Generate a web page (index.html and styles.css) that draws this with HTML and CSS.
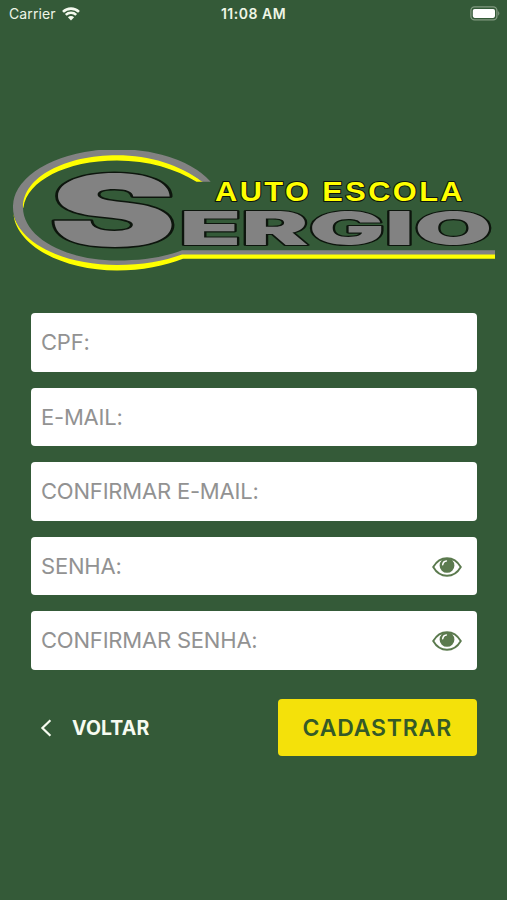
FILE: index.html
```
<!DOCTYPE html>
<html lang="pt-BR">
<head>
<meta charset="UTF-8">
<meta name="viewport" content="width=device-width, initial-scale=1">
<title>Auto Escola Sergio - Cadastro</title>

<link rel="stylesheet" href="styles.css">
</head>

<body>

<!-- barra de status -->
<header class="status">
    <div class="carrier">
        <span>Carrier</span>
        <svg class="wifi" viewBox="0 0 18 14">
            <path d="M1 4.9 A11.5 11.5 0 0 1 17 4.9" />
            <path d="M3.8 7.9 A7.5 7.5 0 0 1 14.2 7.9" />
            <path class="dot" d="M5.9 10.2 A4.4 4.4 0 0 1 12.1 10.2 L9 13.4 Z" />
        </svg>
    </div>
    <div class="time">11:08 AM</div>
    <svg class="battery" viewBox="0 0 31 15">
        <rect class="case" x="0.9" y="0.9" width="26" height="13" rx="3.6" />
        <rect class="charge" x="2.8" y="2.9" width="22.2" height="9" rx="1.8" />
        <path class="tip" d="M28.2 5 Q30.6 7.4 28.2 9.8 Z" />
    </svg>
</header>

<main class="page">

    <!-- logo -->
    <svg class="logo" viewBox="13 150 482 122" role="img" aria-label="Auto Escola Sergio">
        <path class="yellow" d="M203 181.7 C180 164 150 154 117 154 C65 154 21 176 21 210 L23.5 207.5 C27 181 66 160.5 117 160.5 C148 160.5 176 169 196.5 181.7 Z" />
        <path class="yellow" d="M13.5 214 C16 245 62 270.5 117 270.5 C142 270.5 165 266 183 258.8 H495 V253.5 H182 C162 261 142 264 117 264 C62 264 19 240 13.5 214 Z" />
        <path class="gray" d="M210.7 181.7 A104 57.5 0 0 0 13 207.5 C13 240 60 265 117 265 C142 265 164 261 182 254.5 H495 V250.3 H182 C163 257.5 142 260.5 117 260.5 C65 260.5 23 237 23 207.5 C23 177 65 155.3 117 155.3 C150 155.3 180 165 202 181.7 Z" />
        <text class="big" x="49" y="246" textLength="128" lengthAdjust="spacingAndGlyphs">S</text>
        <text class="name" x="179.5" y="244.6" textLength="313" lengthAdjust="spacingAndGlyphs">ERGIO</text>
        <text class="sub" x="215" y="201.4" textLength="250" lengthAdjust="spacingAndGlyphs">AUTO ESCOLA</text>
    </svg>

    <form class="form">
        <div class="field"><input type="text" placeholder="CPF:"></div>
        <div class="field"><input type="email" placeholder="E-MAIL:"></div>
        <div class="field"><input type="email" placeholder="CONFIRMAR E-MAIL:"></div>
        <div class="field">
            <input type="password" placeholder="SENHA:">
            <svg class="eye" viewBox="0 0 30 20">
                <path class="lid" d="M1.2 10 C4.5 4.3 9.3 1.2 15 1.2 S25.5 4.3 28.8 10 C25.5 15.7 20.7 18.8 15 18.8 S4.5 15.7 1.2 10 Z" />
                <circle class="iris" cx="15" cy="8.4" r="7.4" />
                <path class="shine" d="M10.7 7.8 C10.9 5.5 12.4 4.1 14.4 3.9" />
            </svg>
        </div>
        <div class="field">
            <input type="password" placeholder="CONFIRMAR SENHA:">
            <svg class="eye" viewBox="0 0 30 20">
                <path class="lid" d="M1.2 10 C4.5 4.3 9.3 1.2 15 1.2 S25.5 4.3 28.8 10 C25.5 15.7 20.7 18.8 15 18.8 S4.5 15.7 1.2 10 Z" />
                <circle class="iris" cx="15" cy="8.4" r="7.4" />
                <path class="shine" d="M10.7 7.8 C10.9 5.5 12.4 4.1 14.4 3.9" />
            </svg>
        </div>

        <div class="actions">
            <a class="back" href="#">
                <svg class="arrow" viewBox="0 0 12 18"><path d="M10.4 1.2 L2.4 9 L10.4 16.8" /></svg>
                <span>VOLTAR</span>
            </a>
            <button class="submit" type="button">CADASTRAR</button>
        </div>
    </form>

</main>

</body>
</html>
```
FILE: styles.css
```
* {
    box-sizing: border-box;
}

body {
    margin: 0;
    min-height: 900px;
    background: #345a38;
    font-family: Inter, "Liberation Sans", sans-serif;
}

/* ===== barra de status ===== */
.status {
    display: grid;
    grid-template-columns: 1fr auto 1fr;
    align-items: center;
    height: 27px;
    padding: 0 6px 0 9px;
    color: #eef5e6;
    font-size: 14px;
}

.carrier {
    display: flex;
    align-items: center;
    gap: 6px;
    letter-spacing: 0.1px;
}

.wifi {
    width: 18px;
    height: 14px;
    fill: none;
    stroke: #f4faee;
    stroke-width: 2.6;
}

.wifi .dot {
    fill: #f4faee;
    stroke: none;
}

.time {
    margin-right: 3px;
    font-weight: 600;
    letter-spacing: 0.5px;
}

.battery {
    width: 31px;
    height: 15px;
    justify-self: end;
}

.case {
    fill: none;
    stroke: #819a80;
    stroke-width: 1.3;
}

.charge { fill: #fff; }
.tip    { fill: #819a80; }

/* ===== logo ===== */
.page {
    padding: 123px 12px 0 13px;
}

.logo {
    display: block;
    width: 482px;
    height: 122px;
}

.gray   { fill: #828282; }
.yellow { fill: #ffff00; }

.logo text {
    stroke: #0d150d;
    paint-order: stroke;
    stroke-linejoin: round;
}

.big {
    font-size: 99px;
    font-weight: 900;
    fill: #828282;
    stroke-width: 3px;
}

.name {
    font-size: 47px;
    font-weight: 900;
    fill: #828282;
    stroke-width: 2.2px;
}

.sub {
    font-family: "Liberation Sans", sans-serif;
    font-size: 27.5px;
    font-weight: 700;
    letter-spacing: 2.2px;
    fill: #ffff00;
    stroke-width: 2px;
}

/* ===== formulário ===== */
.form {
    display: flex;
    flex-direction: column;
    gap: 16px;
    margin: 41.4px 18.5px 0 18px;
}

.field {
    display: flex;
    align-items: center;
    height: 58.5px;
    padding: 0 15px 0 10px;
    background: #fff;
    border-radius: 4px;
}

.field input {
    flex: 1;
    min-width: 0;
    padding: 0 0 1px;
    border: 0;
    outline: 0;
    background: none;
    font: 400 22px Inter, "Liberation Sans", sans-serif;
    letter-spacing: -0.2px;
    color: #333;
}

.field input::placeholder {
    color: #929292;
    opacity: 1;
}

.eye {
    width: 30px;
    height: 20px;
    margin-top: 1px;
    fill: none;
}

.lid {
    stroke: #5b7a4e;
    stroke-width: 1.9;
}

.iris {
    fill: #5b7a4e;
}

.shine {
    stroke: #fff;
    stroke-width: 1.5;
    stroke-linecap: round;
}

/* ===== botões ===== */
.actions {
    display: flex;
    justify-content: space-between;
    align-items: center;
    margin-top: 13px;
}

.back {
    display: flex;
    align-items: center;
    gap: 20px;
    padding-left: 9px;
    color: #f6fbf0;
    font-size: 19.5px;
    font-weight: 700;
    letter-spacing: 0.1px;
    text-decoration: none;
}

.arrow {
    width: 12px;
    height: 18px;
    fill: none;
    stroke: #f6fbf0;
    stroke-width: 2.2;
}

.submit {
    width: 198.5px;
    height: 57.5px;
    padding: 0;
    border: 0;
    border-radius: 4px;
    background: #f4e10a;
    color: #345a28;
    font: 600 23px Inter, "Liberation Sans", sans-serif;
    letter-spacing: 0.8px;
}
```
